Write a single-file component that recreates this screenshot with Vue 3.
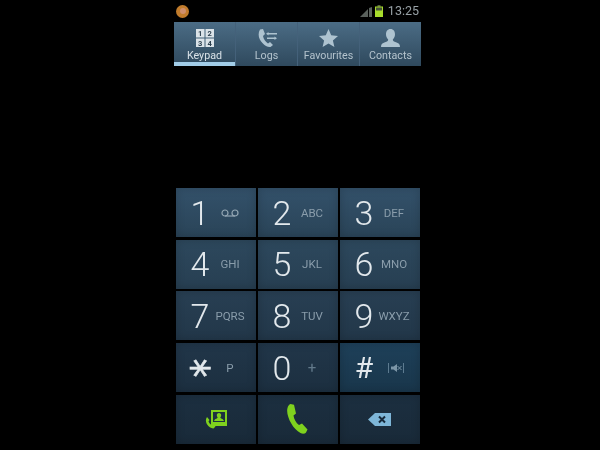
<template>
  <div class="page">
    <div class="screen">
      <div class="status">
        <span class="app-dot"><span class="app-dot-inner"></span></span>
        <div class="status-right">
          <svg class="signal" width="12" height="10" viewBox="0 0 12 10">
            <path d="M0 10 8 2V10ZM9 1 12 0V10H9Z" fill="#5a615c" />
          </svg>
          <svg class="battery" width="8" height="12" viewBox="0 0 8 12">
            <rect x="2.500" y="0" width="3" height="2" fill="#55603f" />
            <rect x="0" y="1.500" width="8" height="10.500" fill="#a8dc2c" />
            <rect x="1" y="2.500" width="6" height="3" fill="#47533a" />
          </svg>
          <span class="time">13:25</span>
        </div>
      </div>

      <div class="tabs">
        <div v-for="(tab, i) in tabs" :key="tab" class="tab" :class="{ active: i === 0 }">
          <svg v-if="i === 0" width="18" height="18" viewBox="0 0 18 18">
            <rect x="0" y="0" width="8.500" height="8.500" fill="#dbe3e8" />
            <rect x="9.500" y="0" width="8.500" height="8.500" fill="#dbe3e8" />
            <rect x="0" y="9.500" width="8.500" height="8.500" fill="#dbe3e8" />
            <rect x="9.500" y="9.500" width="8.500" height="8.500" fill="#dbe3e8" />
            <text x="4.200" y="7" class="mini dark">1</text>
            <text x="13.700" y="7" class="mini dark">2</text>
            <text x="4.200" y="16.500" class="mini dark">3</text>
            <text x="13.700" y="16.500" class="mini dark">4</text>
          </svg>
          <svg v-else-if="i === 1" width="20" height="18" viewBox="0 0 20 18">
            <path d="M3 .5 6 0 8 5 6 7C6.500 10 8.500 13 11 14.500L13 13 16 16 13.500 18C8 18.500 -2 9 3 .5Z" fill="#aec3d0" />
            <path d="M11.500 4H20V5.500H11.500ZM9 4.700 11.500 3V6.500ZM10 8.500H17.500V10H10ZM20 9.200 17.500 7.500V11Z" fill="#aec3d0" />
          </svg>
          <svg v-else-if="i === 2" width="19" height="18" viewBox="0 0 19 18">
            <path d="M9.500 0 12.200 6.200 19 6.900 13.900 11.400 15.400 18 9.500 14.600 3.600 18 5.100 11.400 0 6.900 6.800 6.200Z" fill="#aec3d0" />
          </svg>
          <svg v-else width="19" height="18" viewBox="0 0 19 18">
            <path d="M9.500 0C12.500 0 14 2.400 14 5.200 14 7.500 13 9.400 11.800 10.500 11.800 12 13 12.600 15 13.300 17.500 14.200 19 15 19 18H0C0 15 1.500 14.200 4 13.300 6 12.600 7.200 12 7.200 10.500 6 9.400 5 7.500 5 5.200 5 2.400 6.500 0 9.500 0Z" fill="#aec3d0" />
          </svg>
          <span class="tab-label">{{ tab }}</span>
        </div>
      </div>

      <div class="keypad">
        <div
          v-for="(key, i) in keys"
          :key="i"
          class="key"
          :class="['row' + Math.floor(i / 3), { lit: key.digit === '#', 'action-key': !key.digit }]"
        >
          <span v-if="key.digit" class="digit" :class="{ star: key.digit === '*', hash: key.digit === '#' }">{{ key.digit }}</span>
          <span v-if="key.sub" class="sub" :class="{ plus: key.sub === '+' }">{{ key.sub }}</span>

          <svg v-if="key.icon === 'voicemail'" width="18" height="8" viewBox="0 0 18 8">
            <circle cx="4" cy="4" r="3" fill="none" stroke="#93a6b3" stroke-width="1.200" />
            <circle cx="14" cy="4" r="3" fill="none" stroke="#93a6b3" stroke-width="1.200" />
            <path d="M4 7h10" stroke="#93a6b3" stroke-width="1.200" />
          </svg>
          <svg v-if="key.icon === 'mute'" class="mute-icon" width="16" height="10" viewBox="0 0 16 10">
            <path d="M.5 0v10M15.500 0v10" stroke="#5d7b90" stroke-width="1" />
            <path d="M3 3.500h2.500L9 1v8L5.500 6.500H3z" fill="#7c96a7" />
            <path d="M9.500 3l4 4M13.500 3l-4 4" stroke="#7c96a7" stroke-width="1" />
          </svg>

          <svg v-if="key.icon === 'contacts'" width="22" height="19" viewBox="0 0 22 19">
            <path d="M6 0h16v16H6z" fill="#7fd11e" />
            <path d="M8 2h12v10H8z" fill="#1c3040" />
            <path d="M14 3c1.500 0 2.200 1 2.200 2.200 0 1-.4 1.700-.9 2.200 0 1 2.700 1 3.700 3.600H9c1-2.600 3.700-2.600 3.700-3.600-.5-.5-.9-1.200-.9-2.200C11.800 4 12.500 3 14 3Z" fill="#7fd11e" />
            <path d="M2 7 4.500 10 3.500 11.500C4 13 5.500 14.500 7 15L8.500 14 10.500 16.500 8.500 18.500C4 18.500 -1.500 12 2 7Z" fill="#7fd11e" />
          </svg>
          <svg v-if="key.icon === 'call'" width="21" height="30" viewBox="0 0 21 30">
            <path d="M3.500 0 7 .8 9 9.500 6.500 11.500C7 15 9 19 12 21L15 19.500 20.500 25.500 19 28.500C18 30 15.500 30 13.500 29 5.500 25 -1.500 11 .5 4 1 2 2 .5 3.500 0Z" fill="#7fd11e" />
          </svg>
          <svg v-if="key.icon === 'backspace'" width="23" height="13" viewBox="0 0 23 13">
            <path d="M7 0h16v13H7L0 6.500Z" fill="#7eb6d8" />
            <path d="M11 3.500l6 6M17 3.500l-6 6" stroke="#16293a" stroke-width="2" />
          </svg>
        </div>
      </div>
    </div>
  </div>
</template>

<script setup>
const tabs = ['Keypad', 'Logs', 'Favourites', 'Contacts']

const keys = [
  { digit: '1', icon: 'voicemail' },
  { digit: '2', sub: 'ABC' },
  { digit: '3', sub: 'DEF' },
  { digit: '4', sub: 'GHI' },
  { digit: '5', sub: 'JKL' },
  { digit: '6', sub: 'MNO' },
  { digit: '7', sub: 'PQRS' },
  { digit: '8', sub: 'TUV' },
  { digit: '9', sub: 'WXYZ' },
  { digit: '*', sub: 'P' },
  { digit: '0', sub: '+' },
  { digit: '#', icon: 'mute' },
  { icon: 'contacts' },
  { icon: 'call' },
  { icon: 'backspace' }
]
</script>

<style>
html,
body {
  margin: 0;
  background: #000;
}
</style>

<style scoped>
.page {
  width: 600px;
  height: 450px;
  background: #000;
  overflow: hidden;
  font-family: "Roboto", "Liberation Sans", sans-serif;
}

.screen {
  width: 247px;
  margin-left: 174px;
  filter: blur(0.6px);
}

.status {
  height: 22px;
  display: flex;
  align-items: center;
  justify-content: space-between;
  padding: 0 2px;
  box-sizing: border-box;
}

.app-dot {
  width: 13px;
  height: 13px;
  border-radius: 50%;
  background: #c17c2c;
  display: flex;
  align-items: center;
  justify-content: center;
}

.app-dot-inner {
  width: 6px;
  height: 6px;
  border-radius: 50%;
  background: #cf8f6c;
}

.status-right {
  display: flex;
  align-items: center;
  gap: 2px;
}

.signal {
  margin-top: 2px;
}

.battery {
  margin: 0 3px 0 1px;
}

.time {
  color: #98a1a6;
  font-size: 12.500px;
  line-height: 14px;
}

.tabs {
  height: 44px;
  display: flex;
  background: linear-gradient(#4b6c85, #2f495d);
}

.tab {
  flex: 1;
  display: flex;
  flex-direction: column;
  align-items: center;
  box-sizing: border-box;
  padding-top: 7px;
  height: 44px;
  border-left: 1px solid #44617a;
}

.tab:first-child {
  border-left: none;
}

.tab svg {
  height: 18px;
  flex: none;
}

.tab.active {
  border-bottom: 4px solid #a2cde8;
}

.tab-label {
  margin-top: 3px;
  font-size: 10.700px;
  line-height: 12px;
  color: #b4c3cd;
}

.tab.active .tab-label {
  color: #d8e1e7;
}

.mini {
  font-size: 7.500px;
  font-weight: 700;
  text-anchor: middle;
}

.dark {
  fill: #2b3f4e;
}

.keypad {
  margin: 122px 0 0 2px;
  width: 244px;
  display: grid;
  grid-template-columns: 79.500px 79.500px 79.500px;
  grid-auto-rows: 49px;
  column-gap: 2.500px;
  row-gap: 2.700px;
}

.key {
  display: grid;
  grid-template-columns: 36px 24px;
  padding-left: 6px;
  align-items: center;
  justify-items: center;
  box-shadow: inset 0 0 10px rgba(0, 0, 0, 0.18);
}

.action-key {
  display: flex;
  justify-content: center;
  padding-left: 0;
}

.row0 {
  background: linear-gradient(#33516a, #2a4458);
}

.row1 {
  background: linear-gradient(#2d485d, #273f52);
}

.row2 {
  background: linear-gradient(#283f53, #223749);
}

.row3 {
  background: linear-gradient(#213649, #1c2f40);
}

.row4 {
  background: linear-gradient(#1c2f40, #192a39);
}

.row3.lit {
  background: linear-gradient(#1e4059, #19364b);
}

.digit {
  color: #e2e8ec;
  font-size: 34px;
  font-weight: 300;
  line-height: 36px;
}

.star {
  font-family: "DejaVu Sans", sans-serif;
  font-size: 44px;
  font-weight: 400;
  line-height: 44px;
  height: 44px;
  -webkit-text-stroke: 0.6px #e2e8ec;
  transform: translate(-8px, 0) scaleY(0.85) rotate(90deg);
}

.hash {
  font-size: 30px;
  font-weight: 400;
}

.sub {
  color: #8a9dab;
  font-size: 11.500px;
  line-height: 14px;
  white-space: nowrap;
}

.sub.plus {
  font-size: 15px;
  color: #62798a;
}

.mute-icon {
  margin-left: 4px;
}
</style>
